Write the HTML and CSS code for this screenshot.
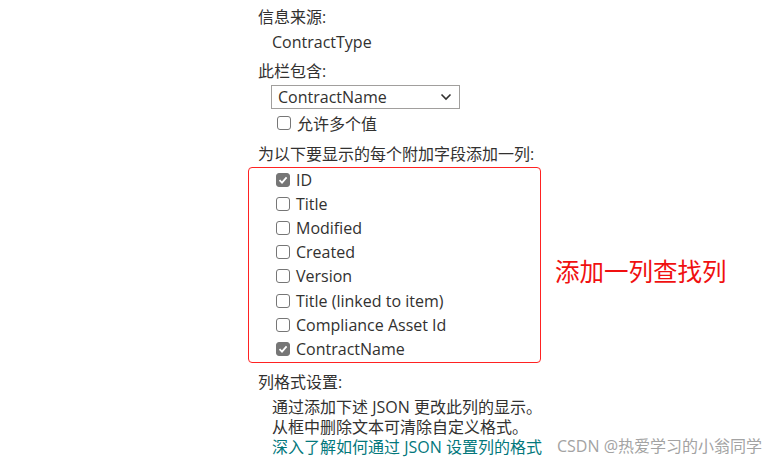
FILE: index.html
```html
<!DOCTYPE html>
<html lang="zh">
<head>
<meta charset="utf-8">
<title>查阅列设置</title>
<link rel="stylesheet" href="styles.css">
</head>
<body>

<div class="panel">
  <div class="lbl">信息来源:</div>
  <div class="val">ContractType</div>

  <div class="lbl gap">此栏包含:</div>
  <div class="pick">
    <select>
      <option>ContractName</option>
    </select>
    <svg class="chev" width="12" height="8" viewBox="0 0 12 8"><path d="M1.5 1.5 6 6l4.5-4.5" fill="none" stroke="#323130" stroke-width="1.6"/></svg>
  </div>
  <label class="chk multi"><input type="checkbox">允许多个值</label>

  <div class="lbl gap2">为以下要显示的每个附加字段添加一列:</div>
  <div class="extra">
    <div class="box">
      <label class="chk"><input type="checkbox" checked>ID</label>
      <label class="chk"><input type="checkbox">Title</label>
      <label class="chk"><input type="checkbox">Modified</label>
      <label class="chk"><input type="checkbox">Created</label>
      <label class="chk"><input type="checkbox">Version</label>
      <label class="chk"><input type="checkbox">Title (linked to item)</label>
      <label class="chk"><input type="checkbox">Compliance Asset Id</label>
      <label class="chk"><input type="checkbox" checked>ContractName</label>
    </div>
    <div class="note">添加一列查找列</div>
  </div>

  <div class="lbl gap2">列格式设置:</div>
  <div class="fmt">
    <p>通过添加下述 JSON 更改此列的显示。</p>
    <p>从框中删除文本可清除自定义格式。</p>
    <p><a href="#">深入了解如何通过 JSON 设置列的格式</a></p>
  </div>
</div>

<div class="mark">CSDN @热爱学习的小翁同学</div>

</body>
</html>
```

FILE: styles.css
```css
/* --------- GENEL --------- */
*{box-sizing:border-box;margin:0;padding:0}
body{
  font-family:'Open Sans','Noto Sans CJK SC',sans-serif;
  font-size:16px;
  color:#323130;
  background:#fff;
  width:778px;
  height:463px;
  overflow:hidden;
  position:relative;
}

.panel{padding:5px 0 0 258px}
.lbl{line-height:24px}
.val{line-height:24px;padding-left:14px;margin-top:1px}
.gap{margin-top:5px}
.gap2{margin-top:7px}

/* --------- SELECT --------- */
.pick{
  position:relative;
  width:189px;
  height:24px;
  margin:2px 0 0 13px;
}
.pick select{
  appearance:none;
  width:100%;
  height:100%;
  border:1px solid #a19f9d;
  border-radius:0;
  background:#fff;
  font:inherit;
  color:#323130;
  padding:0 24px 0 6px;
}
.chev{position:absolute;right:8px;top:8px;pointer-events:none}

/* --------- CHECKBOX --------- */
.chk{
  display:flex;
  align-items:center;
  height:24px;
  padding-left:19px;
}
.chk input{
  appearance:none;
  width:14px;
  height:14px;
  margin-right:6px;
  border:1px solid #767676;
  border-radius:3px;
  background:#fff;
  flex:none;
}
.chk input:checked{
  background:#767676 no-repeat center/10px 10px;
  background-image:url("data:image/svg+xml,%3Csvg xmlns='http://www.w3.org/2000/svg' viewBox='0 0 10 10'%3E%3Cpath d='M1.5 5.2 4 7.6 8.6 2.4' fill='none' stroke='%23fff' stroke-width='1.8'/%3E%3C/svg%3E");
}
.multi{margin-top:2px}

/* --------- KUTU --------- */
.extra{display:flex;align-items:center;margin-left:-10px;margin-top:1px}
.box{
  width:293px;
  border:1px solid #f22;
  border-radius:4px;
  padding-bottom:1px;
}
.box .chk{padding-left:27px;height:24.1px}
.note{
  margin-left:14px;
  margin-top:12px;
  font-size:24.5px;
  color:#f01010;
  font-family:'Noto Sans CJK SC',sans-serif;
}

.fmt{padding-left:14px;margin-top:3px}
.fmt p{line-height:20px}
.fmt a{color:#03787c;text-decoration:none}

.mark{
  position:absolute;
  left:557px;
  top:435px;
  line-height:22px;
  font-size:16px;
  color:#a3a3a3;
}
```
